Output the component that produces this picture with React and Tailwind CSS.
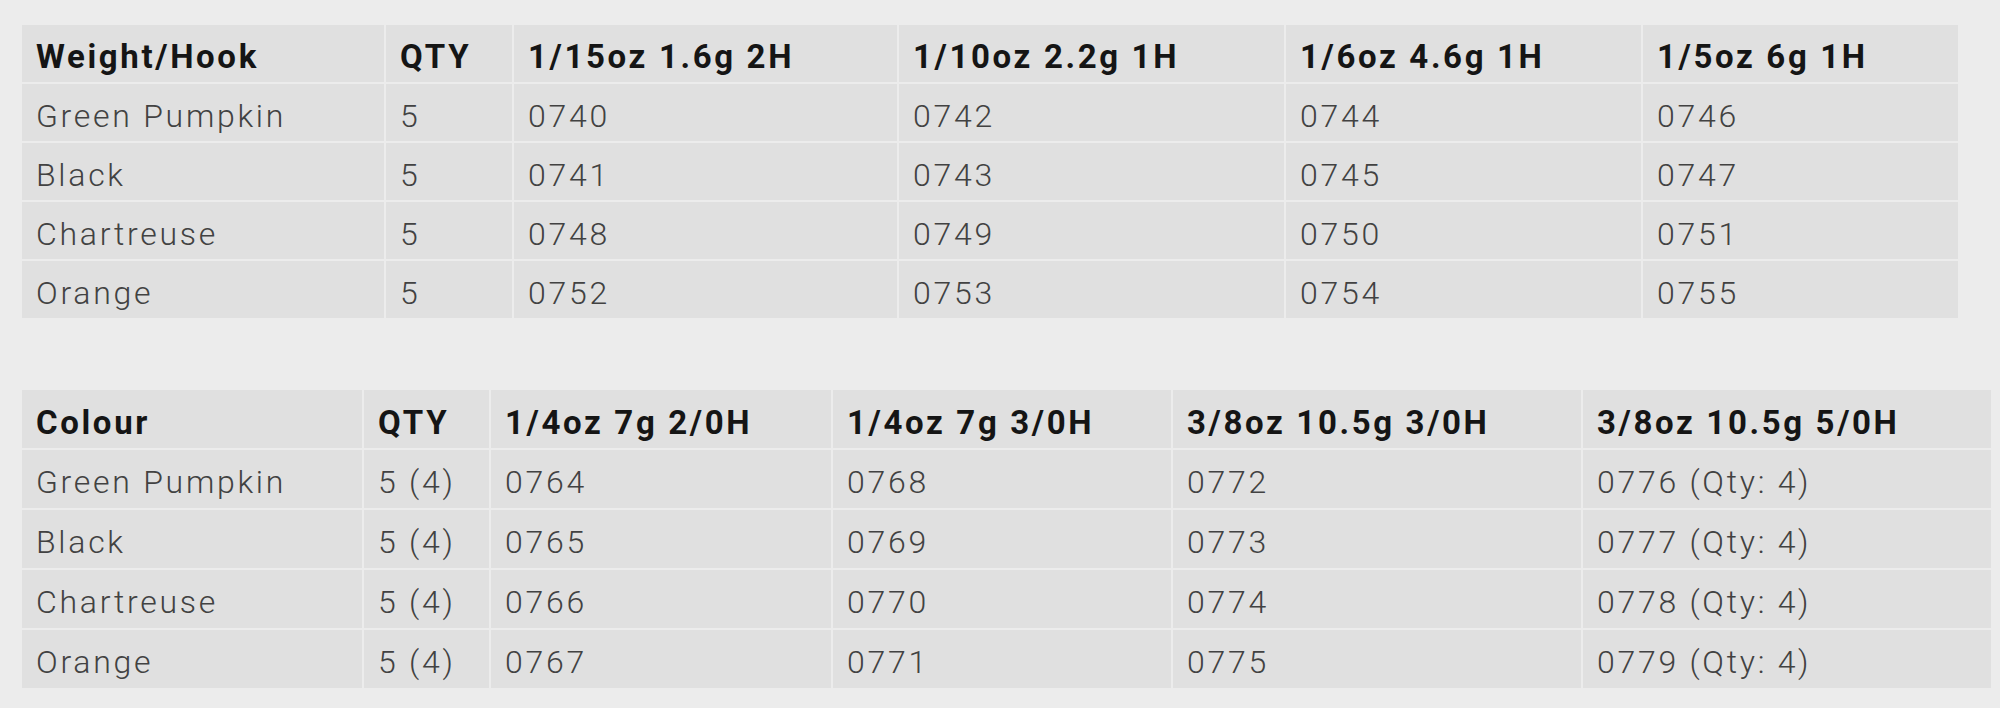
const tableOne = {
  widths: ['w-[362px]', 'w-[126px]', 'w-[383px]', 'w-[385px]', 'w-[355px]', 'w-[315px]'],
  head: ['Weight/Hook', 'QTY', '1/15oz 1.6g 2H', '1/10oz 2.2g 1H', '1/6oz 4.6g 1H', '1/5oz 6g 1H'],
  rows: [
    ['Green Pumpkin', '5', '0740', '0742', '0744', '0746'],
    ['Black', '5', '0741', '0743', '0745', '0747'],
    ['Chartreuse', '5', '0748', '0749', '0750', '0751'],
    ['Orange', '5', '0752', '0753', '0754', '0755'],
  ],
}

const tableTwo = {
  widths: ['w-[340px]', 'w-[125px]', 'w-[340px]', 'w-[338px]', 'w-[408px]', 'w-[408px]'],
  head: ['Colour', 'QTY', '1/4oz 7g 2/0H', '1/4oz 7g 3/0H', '3/8oz 10.5g 3/0H', '3/8oz 10.5g 5/0H'],
  rows: [
    ['Green Pumpkin', '5 (4)', '0764', '0768', '0772', '0776 (Qty: 4)'],
    ['Black', '5 (4)', '0765', '0769', '0773', '0777 (Qty: 4)'],
    ['Chartreuse', '5 (4)', '0766', '0770', '0774', '0778 (Qty: 4)'],
    ['Orange', '5 (4)', '0767', '0771', '0775', '0779 (Qty: 4)'],
  ],
}

function SpecTable({ data, width, rowH }) {
  return (
    <table className={`table-fixed border-separate border-spacing-[2px] ${width}`}>
      <thead>
        <tr>
          {data.head.map((h, i) => (
            <th
              key={i}
              className={`${data.widths[i]} ${rowH} bg-[#e0e0e0] pl-[14px] pt-[6px] text-left align-middle text-[33px] font-bold text-[#151515] tracking-[0.08em]`}
            >
              {h}
            </th>
          ))}
        </tr>
      </thead>
      <tbody>
        {data.rows.map((row, r) => (
          <tr key={r}>
            {row.map((cell, c) => (
              <td
                key={c}
                className={`${rowH} bg-[#e0e0e0] pl-[14px] pt-[6px] text-left align-middle text-[32px] font-light text-[#424242] tracking-[0.085em]`}
              >
                {cell}
              </td>
            ))}
          </tr>
        ))}
      </tbody>
    </table>
  )
}

export default function App() {
  return (
    <div className="min-h-[708px] w-[2000px] bg-[#ececec] pl-[20px] pt-[23px] leading-none font-['Roboto',sans-serif]">
      <SpecTable data={tableOne} width="w-[1940px]" rowH="h-[57px]" />
      <div className="h-[68px]" />
      <SpecTable data={tableTwo} width="w-[1973px]" rowH="h-[58px]" />
    </div>
  )
}
